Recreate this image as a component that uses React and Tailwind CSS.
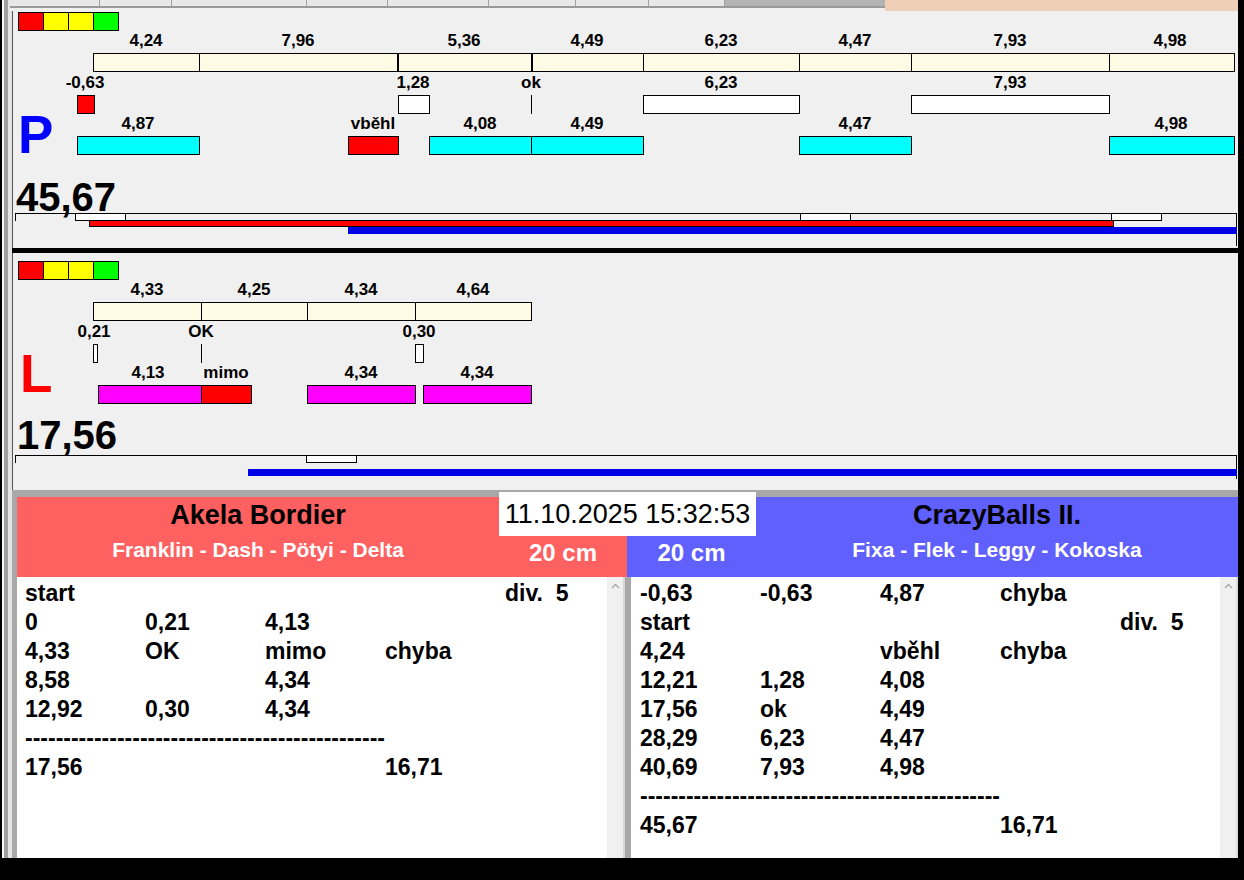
import React from "react";

const X0 = 13;

const lightsP = 12;
const lightsL = 261;

const rowsP = {
  boxes: [
    { x1: 93, x2: 199, y1: 53, y2: 71, cls: "bg-[#fffbe4]" },
    { x1: 199, x2: 397, y1: 53, y2: 71, cls: "bg-[#fffbe4]" },
    { x1: 398, x2: 531, y1: 53, y2: 71, cls: "bg-[#fffbe4]" },
    { x1: 532, x2: 643, y1: 53, y2: 71, cls: "bg-[#fffbe4]" },
    { x1: 643, x2: 799, y1: 53, y2: 71, cls: "bg-[#fffbe4]" },
    { x1: 799, x2: 911, y1: 53, y2: 71, cls: "bg-[#fffbe4]" },
    { x1: 911, x2: 1109, y1: 53, y2: 71, cls: "bg-[#fffbe4]" },
    { x1: 1109, x2: 1234, y1: 53, y2: 71, cls: "bg-[#fffbe4]" },
    { x1: 77, x2: 94, y1: 95, y2: 113, cls: "bg-[#ff0000]" },
    { x1: 398, x2: 429, y1: 95, y2: 113, cls: "bg-white" },
    { x1: 643, x2: 799, y1: 95, y2: 113, cls: "bg-white" },
    { x1: 911, x2: 1109, y1: 95, y2: 113, cls: "bg-white" },
    { x1: 77, x2: 199, y1: 136, y2: 154, cls: "bg-[#00ffff]" },
    { x1: 348, x2: 398, y1: 136, y2: 154, cls: "bg-[#ff0000]" },
    { x1: 429, x2: 531, y1: 136, y2: 154, cls: "bg-[#00ffff]" },
    { x1: 531, x2: 643, y1: 136, y2: 154, cls: "bg-[#00ffff]" },
    { x1: 799, x2: 911, y1: 136, y2: 154, cls: "bg-[#00ffff]" },
    { x1: 1109, x2: 1234, y1: 136, y2: 154, cls: "bg-[#00ffff]" },
  ],
  lines: [{ x: 531, y1: 95, y2: 113 }],
  labels: [
    { cx: 146, top: 34, t: "4,24" },
    { cx: 298, top: 34, t: "7,96" },
    { cx: 464, top: 34, t: "5,36" },
    { cx: 587, top: 34, t: "4,49" },
    { cx: 721, top: 34, t: "6,23" },
    { cx: 855, top: 34, t: "4,47" },
    { cx: 1010, top: 34, t: "7,93" },
    { cx: 1170, top: 34, t: "4,98" },
    { cx: 85, top: 76, t: "-0,63" },
    { cx: 413, top: 76, t: "1,28" },
    { cx: 531, top: 76, t: "ok" },
    { cx: 721, top: 76, t: "6,23" },
    { cx: 1010, top: 76, t: "7,93" },
    { cx: 138, top: 117, t: "4,87" },
    { cx: 373, top: 117, t: "vběhl" },
    { cx: 480, top: 117, t: "4,08" },
    { cx: 587, top: 117, t: "4,49" },
    { cx: 855, top: 117, t: "4,47" },
    { cx: 1171, top: 117, t: "4,98" },
  ],
  track: {
    y: 213,
    rtick: 33,
    boxes: [
      { x1: 75, x2: 125, y1: 213, y2: 220, cls: "bg-white" },
      { x1: 800, x2: 850, y1: 213, y2: 220, cls: "bg-white" },
      { x1: 1111, x2: 1161, y1: 213, y2: 220, cls: "bg-white" },
      { x1: 89, x2: 1113, y1: 220, y2: 226, cls: "bg-[#ff0000]" },
    ],
    blue: { x1: 348, y1: 227, y2: 233 },
  },
};

const rowsL = {
  boxes: [
    { x1: 93, x2: 201, y1: 302, y2: 320, cls: "bg-[#fffbe4]" },
    { x1: 201, x2: 307, y1: 302, y2: 320, cls: "bg-[#fffbe4]" },
    { x1: 307, x2: 415, y1: 302, y2: 320, cls: "bg-[#fffbe4]" },
    { x1: 415, x2: 531, y1: 302, y2: 320, cls: "bg-[#fffbe4]" },
    { x1: 93, x2: 97, y1: 344, y2: 362, cls: "bg-white" },
    { x1: 415, x2: 423, y1: 344, y2: 362, cls: "bg-white" },
    { x1: 98, x2: 201, y1: 385, y2: 403, cls: "bg-[#ff00ff]" },
    { x1: 201, x2: 251, y1: 385, y2: 403, cls: "bg-[#ff0000]" },
    { x1: 307, x2: 415, y1: 385, y2: 403, cls: "bg-[#ff00ff]" },
    { x1: 423, x2: 531, y1: 385, y2: 403, cls: "bg-[#ff00ff]" },
  ],
  lines: [{ x: 201, y1: 344, y2: 362 }],
  labels: [
    { cx: 147, top: 283, t: "4,33" },
    { cx: 254, top: 283, t: "4,25" },
    { cx: 361, top: 283, t: "4,34" },
    { cx: 473, top: 283, t: "4,64" },
    { cx: 94, top: 325, t: "0,21" },
    { cx: 201, top: 325, t: "OK" },
    { cx: 419, top: 325, t: "0,30" },
    { cx: 148, top: 366, t: "4,13" },
    { cx: 226, top: 366, t: "mimo" },
    { cx: 361, top: 366, t: "4,34" },
    { cx: 477, top: 366, t: "4,34" },
  ],
  track: {
    y: 455,
    rtick: 24,
    boxes: [{ x1: 306, x2: 356, y1: 455, y2: 462, cls: "bg-white" }],
    blue: { x1: 248, y1: 469, y2: 475 },
  },
};

function Box({ b, y0 }) {
  return (
    <div
      className={"absolute border border-black " + b.cls}
      style={{ left: b.x1 - X0, top: b.y1 - y0, width: b.x2 - b.x1 + 1, height: b.y2 - b.y1 + 1 }}
    />
  );
}

function Lights({ top, y0 }) {
  const cols = ["bg-[#ff0000]", "bg-[#ffff00]", "bg-[#ffff00]", "bg-[#00ff00]"];
  return (
    <div className="absolute flex" style={{ left: 18 - X0, top: top - y0 }}>
      {cols.map((c, i) => (
        <div key={i} className={"h-[19px] w-[26px] border border-black -ml-px first:ml-0 " + c} />
      ))}
    </div>
  );
}

function Chart({ y0, data, lights, letter, total }) {
  const tr = data.track;
  return (
    <div className="relative h-[237px] overflow-hidden border-l border-[#555] bg-[#f0f0f0]">
      <Lights top={lights} y0={y0} />
      {data.boxes.map((b, i) => (
        <Box key={i} b={b} y0={y0} />
      ))}
      {data.lines.map((l, i) => (
        <div key={i} className="absolute w-px bg-black" style={{ left: l.x - X0, top: l.y1 - y0, height: l.y2 - l.y1 + 1 }} />
      ))}
      {data.labels.map((l, i) => (
        <div
          key={i}
          className="absolute -translate-x-1/2 whitespace-nowrap text-[17px] font-bold leading-none text-black"
          style={{ left: l.cx - X0, top: l.top - 2 - y0 }}
        >
          {l.t}
        </div>
      ))}
      {letter}
      {total}
      <div className="absolute h-px bg-black" style={{ left: 15 - X0, top: tr.y - y0, width: 1222 }} />
      <div className="absolute h-[8px] w-px bg-black" style={{ left: 15 - X0, top: tr.y - y0 }} />
      <div className="absolute w-px bg-black" style={{ left: 1236 - X0, top: tr.y - y0, height: tr.rtick }} />
      {tr.boxes.map((b, i) => (
        <Box key={i} b={b} y0={y0} />
      ))}
      <div
        className="absolute bg-[#0000e6]"
        style={{ left: tr.blue.x1 - X0, top: tr.blue.y1 - y0, width: 1237 - tr.blue.x1, height: tr.blue.y2 - tr.blue.y1 + 1 }}
      />
    </div>
  );
}

const leftRows = [
  ["start", "", "", "", "div.  5"],
  ["0", "0,21", "4,13"],
  ["4,33", "OK", "mimo", "chyba"],
  ["8,58", "", "4,34"],
  ["12,92", "0,30", "4,34"],
  ["-"],
  ["17,56", "", "", "16,71"],
];

const rightRows = [
  ["-0,63", "-0,63", "4,87", "chyba"],
  ["start", "", "", "", "div.  5"],
  ["4,24", "", "vběhl", "chyba"],
  ["12,21", "1,28", "4,08"],
  ["17,56", "ok", "4,49"],
  ["28,29", "6,23", "4,47"],
  ["40,69", "7,93", "4,98"],
  ["-"],
  ["45,67", "", "", "16,71"],
];

const DASHES = "-".repeat(47);

function List({ rows, pl }) {
  return (
    <div className={"h-full bg-white pt-[2px] text-[23px] font-bold leading-[29px] text-black " + pl}>
      {rows.map((r, i) =>
        r[0] === "-" && r.length === 1 ? (
          <div key={i} className="h-[29px] whitespace-pre">{DASHES}</div>
        ) : (
          <div key={i} className="flex h-[29px]">
            {r.map((c, j) => (
              <div key={j} className="w-[120px] shrink-0 whitespace-pre">
                {c}
              </div>
            ))}
          </div>
        )
      )}
    </div>
  );
}

function Scrollbar() {
  return (
    <div className="flex h-full w-[16px] shrink-0 justify-center bg-[#f0f0f0] pt-[6px]">
      <svg width="9" height="6" viewBox="0 0 9 6">
        <polyline points="1,5 4.5,1.5 8,5" fill="none" stroke="#a8a8a8" strokeWidth="1.3" />
      </svg>
    </div>
  );
}

const tabs = [90, 72, 135, 81, 101, 87, 73, 76];

export default function App() {
  return (
    <div className="relative h-[880px] w-[1244px] overflow-hidden bg-black font-['Liberation_Sans',Arial,sans-serif]">
      <div className="ml-[2px] flex h-[858px] w-[1236px] flex-col bg-[#f0f0f0]">
        {/* tab strip */}
        <div className="flex h-[11px] shrink-0">
          <div className="flex w-[8px]">
            <div className="w-[2px] bg-[#f8f8f8]" />
            <div className="w-[4px] bg-[#a0a0a0]" />
            <div className="w-[2px] bg-[#e4e4e4]" />
          </div>
          {tabs.map((w, i) => (
            <div key={i} className="h-[8px] border-b-2 border-r border-[#a0a0a0] border-b-[#9a9a9a] bg-[#e8e8e8]" style={{ width: w }} />
          ))}
          <div className="h-[8px] w-[160px] border-b-2 border-[#9a9a9a] bg-[#b4b4b4]" />
          <div className="h-[11px] flex-1 bg-[#efcfb5]" />
        </div>

        <div className="flex flex-1">
          {/* left frame */}
          <div className="flex w-[10px] shrink-0">
            <div className="w-[2px] bg-[#f8f8f8]" />
            <div className="w-[4px] bg-[#a0a0a0]" />
            <div className="w-[4px] bg-[#e4e4e4]" />
          </div>

          <div className="flex w-[1226px] flex-col">
            <Chart
              y0={11}
              data={rowsP}
              lights={lightsP}
              letter={
                <div className="absolute text-[53px] font-bold leading-none text-[#0000ff]" style={{ left: 18 - X0, top: 108 - 11 }}>
                  P
                </div>
              }
              total={
                <div className="absolute text-[40px] font-bold leading-none text-black" style={{ left: 16 - X0, top: 177 - 11 }}>
                  45,67
                </div>
              }
            />
            <div className="h-[5px] bg-black" />
            <Chart
              y0={253}
              data={rowsL}
              lights={lightsL}
              letter={
                <div className="absolute text-[53px] font-bold leading-none text-[#ff0000]" style={{ left: 20 - X0, top: 347 - 253 }}>
                  L
                </div>
              }
              total={
                <div className="absolute text-[40px] font-bold leading-none text-black" style={{ left: 17 - X0, top: 415 - 253 }}>
                  17,56
                </div>
              }
            />

            {/* bottom area */}
            <div className="flex flex-1 flex-col bg-[#a8a8a8] pl-[5px] pt-[7px]">
              <div className="flex h-[80px] shrink-0">
                <div className="flex w-[610px] bg-[#ff6060]">
                  <div className="flex w-[482px] flex-col items-center pt-[3px]">
                    <div className="text-[27px] font-bold leading-[30px] text-black">Akela Bordier</div>
                    <div className="mt-[8px] text-[21px] font-bold leading-[24px] text-white">Franklin - Dash - Pötyi - Delta</div>
                  </div>
                  <div className="flex w-[128px] flex-col items-center justify-end pb-[10px]">
                    <div className="text-[24px] font-bold leading-[28px] text-white">20 cm</div>
                  </div>
                </div>
                <div className="flex flex-1 bg-[#6060ff]">
                  <div className="flex w-[129px] flex-col items-center justify-end pb-[10px]">
                    <div className="text-[24px] font-bold leading-[28px] text-white">20 cm</div>
                  </div>
                  <div className="flex flex-1 flex-col items-center pt-[3px]">
                    <div className="text-[27px] font-bold leading-[30px] text-black">CrazyBalls II.</div>
                    <div className="mt-[8px] text-[21px] font-bold leading-[24px] text-white">Fixa - Flek - Leggy - Kokoska</div>
                  </div>
                </div>
              </div>

              <div className="flex flex-1">
                <div className="w-[590px] shrink-0">
                  <List rows={leftRows} pl="pl-[8px]" />
                </div>
                <Scrollbar />
                <div className="w-[8px] shrink-0 border-l-2 border-[#d6d6d6] bg-[#a8a8a8]" />
                <div className="w-[589px] shrink-0">
                  <List rows={rightRows} pl="pl-[9px]" />
                </div>
                <Scrollbar />
                <div className="flex-1 bg-[#dcdcdc]" />
              </div>
            </div>
          </div>
        </div>
      </div>

      {/* date stamp overlay */}
      <div className="absolute left-[499px] top-[492px] flex h-[44px] w-[257px] items-center justify-center bg-white text-[27px] leading-none text-black">
        11.10.2025 15:32:53
      </div>
    </div>
  );
}
